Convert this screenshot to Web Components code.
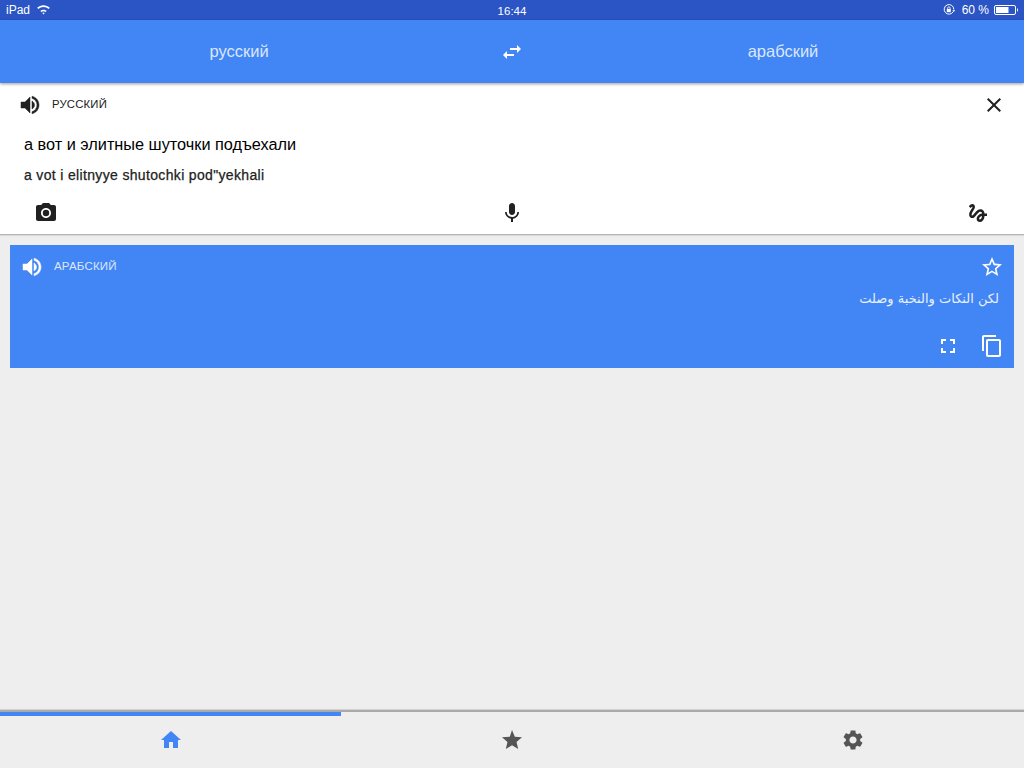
<!DOCTYPE html>
<html lang="ru">
<head>
<meta charset="utf-8">
<title>Translate</title>
<style>
  html, body { margin: 0; padding: 0; height: 100%; }
  body { background: #eeeeee; font-family: "Liberation Sans", Arial, sans-serif; overflow: hidden; }
</style>
</head>
<body>
<translate-app></translate-app>
<script>
// Material icon paths used across the page
const ICONS = {
  volume: 'M3 9v6h4l5 5V4L7 9H3zm13.5 3c0-1.77-1.02-3.29-2.5-4.03v8.05c1.48-.73 2.5-2.25 2.5-4.02zM14 3.23v2.06c2.89.86 5 3.54 5 6.71s-2.11 5.85-5 6.71v2.06c4.01-.91 7-4.49 7-8.77s-2.99-7.86-7-8.77z',
  swap: 'M6.99 11L3 15l3.99 4v-3H14v-2H6.99v-3zM21 9l-3.99-4v3H10v2h7.01v3L21 9z',
  close: 'M19 6.41L17.59 5 12 10.59 6.41 5 5 6.41 10.59 12 5 17.59 6.41 19 12 13.41 17.59 19 19 17.59 13.41 12z',
  camera: 'M12 15.2a3.2 3.2 0 1 0 0-6.4 3.2 3.2 0 0 0 0 6.4zM9 2L7.17 4H4c-1.1 0-2 .9-2 2v12c0 1.1.9 2 2 2h16c1.1 0 2-.9 2-2V6c0-1.1-.9-2-2-2h-3.17L15 2H9zm3 15c-2.76 0-5-2.24-5-5s2.24-5 5-5 5 2.24 5 5-2.24 5-5 5z',
  mic: 'M12 14c1.66 0 2.99-1.34 2.99-3L15 5c0-1.66-1.34-3-3-3S9 3.34 9 5v6c0 1.66 1.34 3 3 3zm5.3-3c0 3-2.54 5.1-5.3 5.1S6.7 14 6.7 11H5c0 3.41 2.72 6.23 6 6.72V21h2v-3.28c3.28-.48 6-3.3 6-6.72h-1.7z',
  gesture: 'M4.59 6.89c.7-.71 1.4-1.35 1.71-1.22.5.2 0 1.03-.3 1.52-.25.42-2.86 3.89-2.86 6.31 0 1.28.48 2.34 1.34 2.98.75.56 1.74.73 2.64.46 1.07-.31 1.95-1.4 3.06-2.77 1.21-1.49 2.83-3.44 4.08-3.44 1.63 0 1.65 1.01 1.76 1.79-3.78.64-5.38 3.67-5.38 5.37 0 1.7 1.44 3.09 3.21 3.09 1.63 0 4.29-1.33 4.69-6.1H21v-2.5h-2.47c-.15-1.65-1.09-4.2-4.03-4.2-2.25 0-4.18 1.91-4.94 2.84-.58.73-2.06 2.48-2.29 2.72-.25.3-.68.84-1.11.84-.45 0-.72-.83-.36-1.92.35-1.09 1.4-2.86 1.85-3.52.78-1.14 1.3-1.92 1.3-3.28C8.95 3.69 7.31 3 6.44 3 5.12 3 3.97 4 3.72 4.25c-.36.36-.66.66-.88.93l1.75 1.71zm9.29 11.66c-.31 0-.74-.26-.74-.72 0-.6.73-2.2 2.87-2.76-.3 2.69-1.43 3.48-2.13 3.48z',
  starBorder: 'M22 9.24l-7.19-.62L12 2 9.19 8.63 2 9.24l5.46 4.73L5.82 21 12 17.27 18.18 21l-1.63-7.03L22 9.24zM12 15.4l-3.76 2.27 1-4.28-3.32-2.88 4.38-.38L12 6.1l1.71 4.04 4.38.38-3.32 2.88 1 4.28L12 15.4z',
  fullscreen: 'M7 14H5v5h5v-2H7v-3zm-2-4h2V7h3V5H5v5zm12 7h-3v2h5v-5h-2v3zM14 5v2h3v3h2V5h-5z',
  copy: 'M16 1H4c-1.1 0-2 .9-2 2v14h2V3h12V1zm3 4H8c-1.1 0-2 .9-2 2v14c0 1.1.9 2 2 2h11c1.1 0 2-.9 2-2V7c0-1.1-.9-2-2-2zm0 16H8V7h11v14z',
  home: 'M10 20v-6h4v6h5v-8h3L12 3 2 12h3v8z',
  star: 'M12 17.27L18.18 21l-1.64-7.03L22 9.24l-7.19-.61L12 2 9.81 8.63 2 9.24l5.46 4.73L5.82 21z',
  settings: 'M19.14 12.94c.04-.3.06-.61.06-.94 0-.32-.02-.64-.07-.94l2.03-1.58c.18-.14.23-.41.12-.61l-1.92-3.32c-.12-.22-.37-.29-.59-.22l-2.39.96c-.5-.38-1.03-.7-1.62-.94l-.36-2.54c-.04-.24-.24-.41-.48-.41h-3.84c-.24 0-.43.17-.47.41l-.36 2.54c-.59.24-1.13.57-1.62.94l-2.39-.96c-.22-.08-.47 0-.59.22L2.74 8.87c-.12.21-.08.47.12.61l2.03 1.58c-.05.3-.09.63-.09.94s.02.64.07.94l-2.03 1.58c-.18.14-.23.41-.12.61l1.92 3.32c.12.22.37.29.59.22l2.39-.96c.5.38 1.03.7 1.62.94l.36 2.54c.05.24.24.41.48.41h3.84c.24 0 .44-.17.47-.41l.36-2.54c.59-.24 1.13-.56 1.62-.94l2.39.96c.22.08.47 0 .59-.22l1.92-3.32c.12-.22.07-.47-.12-.61l-2.01-1.58zM12 15.6c-1.98 0-3.6-1.62-3.6-3.6s1.62-3.6 3.6-3.6 3.6 1.62 3.6 3.6-1.62 3.6-3.6 3.6z'
};

class MdIcon extends HTMLElement {
  connectedCallback() {
    const size = this.getAttribute('size') || 24;
    const name = this.getAttribute('name');
    // the speaker in the reference is drawn a little heavier than the stock glyph
    const weight = name === 'volume' ? 'stroke: currentColor; stroke-width: .5;' : '';
    this.attachShadow({ mode: 'open' }).innerHTML = `
      <style>
        :host { display: block; width: ${size}px; height: ${size}px; flex: none; }
        svg { display: block; width: 100%; height: 100%; fill: currentColor; ${weight} }
      </style>
      <svg viewBox="0 0 24 24" aria-hidden="true"><path d="${ICONS[name] || ''}"/></svg>`;
  }
}
customElements.define('md-icon', MdIcon);

class StatusBar extends HTMLElement {
  constructor() {
    super();
    this.attachShadow({ mode: 'open' }).innerHTML = `
      <style>
        :host {
          display: grid; grid-template-columns: 1fr auto 1fr; align-items: center;
          height: 20px; background: #2b55c5; color: #fff; font-size: 12px; padding: 0 6px; box-sizing: border-box;
        }
        .left, .right { display: flex; align-items: center; }
        .left { gap: 7px; }
        .right { justify-content: flex-end; gap: 5px; }
        .pct { margin-left: 2px; }
        svg { display: block; }
        .time { font-size: 11.5px; padding-top: 1px; }
      </style>
      <div class="left">
        <span>iPad</span>
        <svg width="13" height="10" viewBox="0 0 13 10" fill="#fff">
          <path d="M6.5 2C8.5 2 10.3 2.8 11.6 4L12.8 2.8C11.1 1.2 8.9.2 6.5.2S1.9 1.2.2 2.8L1.4 4C2.7 2.800 4.500 2 6.500 2z"/>
          <path d="M6.500 4.700c-1.200 0-2.300.5-3.200 1.300l1.100 1.100c.6-.5 1.300-.8 2.100-.8s1.500.3 2.100.8L9.700 6c-.9-.8-2-1.300-3.200-1.300z"/>
          <path d="M6.500 7.500c-.5 0-.9.2-1.200.5l1.200 1.500L7.700 8c-.3-.3-.7-.5-1.200-.5z"/>
        </svg>
      </div>
      <div class="time">16:44</div>
      <div class="right">
        <svg width="12" height="12" viewBox="0 0 12 12" fill="none" stroke="#fff">
          <path d="M10.300 7.500A4.800 4.800 0 1 1 10.800 5.500" stroke-width="1"/>
          <path d="M9.300 6.200h3l-1.500 1.800z" fill="#fff" stroke="none"/>
          <rect x="3.800" y="5" width="4" height="3.200" fill="#fff" stroke="none"/>
          <path d="M4.700 5V4a1.200 1.200 0 0 1 2.400 0v1" stroke-width=".8"/>
        </svg>
        <span class="pct">60 %</span>
        <svg width="24" height="10" viewBox="0 0 24 10">
          <rect x=".5" y=".5" width="21" height="9" rx="1.5" fill="none" stroke="#fff"/>
          <rect x="2" y="2" width="12.500" height="6" fill="#fff"/>
          <path d="M23 3.300c.6.2 1 .8 1 1.700s-.4 1.500-1 1.700z" fill="#fff"/>
        </svg>
      </div>`;
  }
}
customElements.define('status-bar', StatusBar);

class LangHeader extends HTMLElement {
  constructor() {
    super();
    this.attachShadow({ mode: 'open' }).innerHTML = `
      <style>
        :host {
          display: grid; grid-template-columns: 1fr 68px 1fr; align-items: center;
          height: 63px; background: #4285f4; color: #dbe7fc; font-size: 16.5px;
          box-shadow: 0 1px 3px rgba(0,0,0,.4); position: relative; z-index: 1;
        }
        div { text-align: center; }
        md-icon { color: #fff; justify-self: center; }
        .target { padding-right: 4px; }
      </style>
      <div>${this.getAttribute('source')}</div>
      <md-icon name="swap" size="24"></md-icon>
      <div class="target">${this.getAttribute('target')}</div>`;
  }
}
customElements.define('lang-header', LangHeader);

class InputPanel extends HTMLElement {
  constructor() {
    super();
    this.attachShadow({ mode: 'open' }).innerHTML = `
      <style>
        :host {
          display: block; height: 152px; background: #fff; color: #212121;
          border-bottom: 1px solid #b5b5b5; box-sizing: border-box; padding-top: 10px;
          box-shadow: 0 1px 1px rgba(0,0,0,.08);
        }
        .top { display: flex; align-items: center; height: 24px; padding: 0 18px 0 18px; }
        .label { font-size: 11.3px; margin: 0 0 2px 10px; line-height: 14px; flex: 1; letter-spacing: .2px; }
        .text { font-size: 16.300px; color: #000; margin: 17px 24px 0; line-height: 20px; }
        .translit {
          font-size: 14px; letter-spacing: .34px; color: #212121; margin: 12px 24px 0; line-height: 18px;
          -webkit-text-stroke: .25px #212121;
        }
        .tools { display: flex; justify-content: space-between; padding: 17px 34px 0; }
      </style>
      <div class="top">
        <md-icon name="volume"></md-icon>
        <span class="label">РУССКИЙ</span>
        <md-icon name="close"></md-icon>
      </div>
      <div class="text"><slot name="text"></slot></div>
      <div class="translit"><slot name="translit"></slot></div>
      <div class="tools">
        <md-icon name="camera"></md-icon>
        <md-icon name="mic"></md-icon>
        <md-icon name="gesture"></md-icon>
      </div>`;
  }
}
customElements.define('input-panel', InputPanel);

class ResultCard extends HTMLElement {
  constructor() {
    super();
    this.attachShadow({ mode: 'open' }).innerHTML = `
      <style>
        :host {
          display: block; height: 123px; margin: 10px 10px 0; background: #4285f4; color: #fff;
          box-sizing: border-box; padding: 10px 10px 0 10px;
        }
        .top { display: flex; align-items: center; height: 24px; }
        .label { font-size: 11.5px; margin: 0 0 2px 10px; line-height: 14px; flex: 1; color: #dbe7fc; letter-spacing: .2px; }
        .text {
          font-family: "DejaVu Sans", sans-serif; font-size: 13px; direction: rtl; color: #e9f0fe;
          margin: 10px 5px 0 0; line-height: 20px; text-align: right;
        }
        .tools { display: flex; justify-content: flex-end; align-items: center; gap: 20px; margin-top: 25px; }
      </style>
      <div class="top">
        <md-icon name="volume"></md-icon>
        <span class="label">АРАБСКИЙ</span>
        <md-icon name="starBorder"></md-icon>
      </div>
      <div class="text" lang="ar"><slot></slot></div>
      <div class="tools">
        <md-icon name="fullscreen"></md-icon>
        <md-icon name="copy"></md-icon>
      </div>`;
  }
}
customElements.define('result-card', ResultCard);

class TabBar extends HTMLElement {
  constructor() {
    super();
    this.attachShadow({ mode: 'open' }).innerHTML = `
      <style>
        :host {
          display: block; height: 58px; background: #eeeeee; border-top: 2px solid #aaa; box-sizing: border-box;
          box-shadow: 0 -1px 1px rgba(0,0,0,.1);
        }
        .progress { height: 4px; width: 341px; background: #4285f4; }
        .tabs { display: grid; grid-template-columns: repeat(3, 1fr); }
        .tab { display: flex; justify-content: center; padding-top: 12px; color: #555; }
        .tab.active { color: #4285f4; }
      </style>
      <div class="progress"></div>
      <div class="tabs">
        <div class="tab active"><md-icon name="home"></md-icon></div>
        <div class="tab"><md-icon name="star"></md-icon></div>
        <div class="tab"><md-icon name="settings"></md-icon></div>
      </div>`;
  }
}
customElements.define('tab-bar', TabBar);

class TranslateApp extends HTMLElement {
  constructor() {
    super();
    this.attachShadow({ mode: 'open' }).innerHTML = `
      <style>
        :host { display: flex; flex-direction: column; height: 768px; }
        .spacer { flex: 1; }
      </style>
      <status-bar></status-bar>
      <lang-header source="русский" target="арабский"></lang-header>
      <input-panel>
        <span slot="text">а вот и элитные шуточки подъехали</span>
        <span slot="translit">a vot i elitnyye shutochki pod"yekhali</span>
      </input-panel>
      <result-card>لكن النكات والنخبة وصلت</result-card>
      <div class="spacer"></div>
      <tab-bar></tab-bar>`;
  }
}
customElements.define('translate-app', TranslateApp);
</script>
</body>
</html>
